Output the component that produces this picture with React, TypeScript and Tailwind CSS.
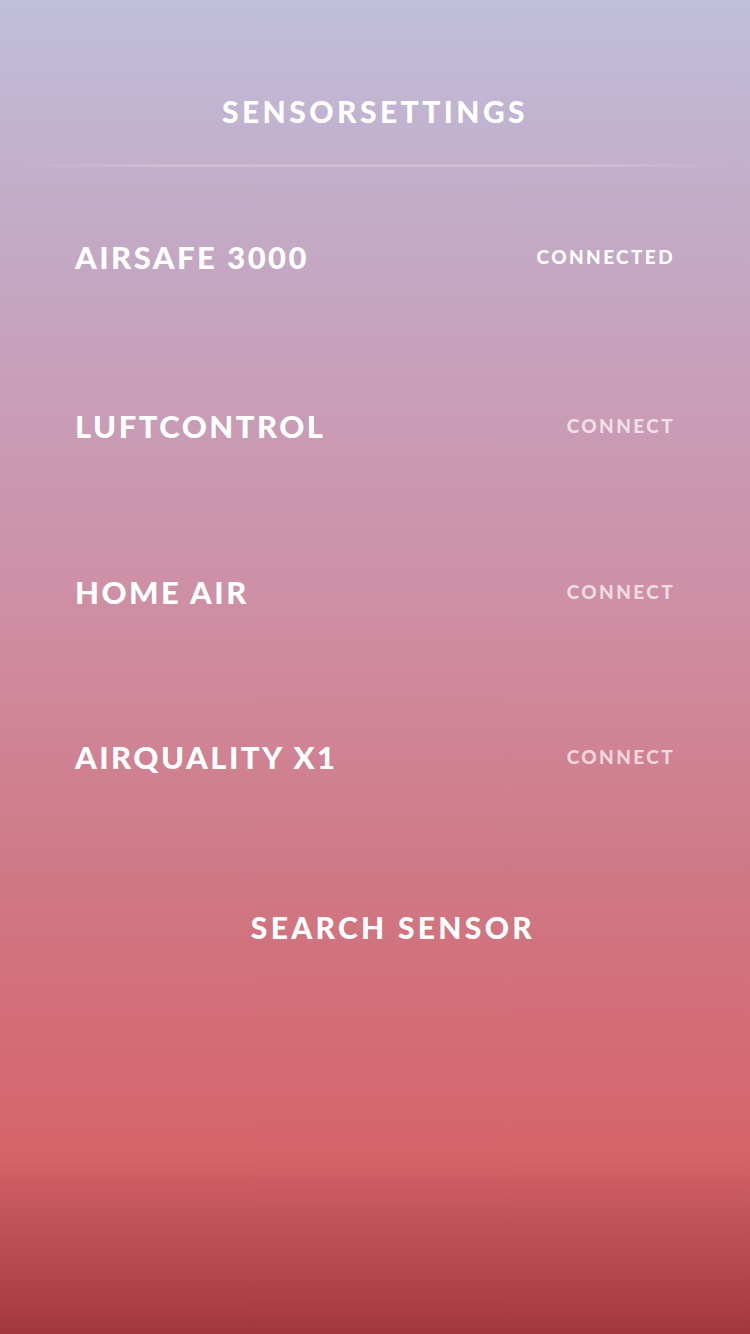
// Sensor settings screen

const SENSORS = [
  { name: 'AIRSAFE 3000', connected: true, mt: 'mt-[70px]' },
  { name: 'LUFTCONTROL', connected: false, mt: 'mt-[129px]' },
  { name: 'HOME AIR', connected: false, mt: 'mt-[126px]' },
  { name: 'AIRQUALITY X1', connected: false, mt: 'mt-[125px]' },
]

export default function App() {
  return (
    <div className="w-[750px] h-[1334px] overflow-hidden bg-[linear-gradient(180deg,#bfbedb_0%,#c4a8c4_19%,#ce8fa5_45%,#d07783_67%,#d6646b_86%,#a3373e_100%)] font-['Lato','Open_Sans',sans-serif] text-white">
      <div className="pt-[93px] h-[129px] text-center text-[30px] leading-[36px] font-black tracking-[0.115em]">
        SENSORSETTINGS
      </div>

      <div className="mt-[35px] mx-[20px] h-[3px] bg-[linear-gradient(90deg,rgba(255,255,255,0)_0%,rgba(255,255,255,0.18)_20%,rgba(255,255,255,0.18)_80%,rgba(255,255,255,0)_100%)]" />

      <ul>
        {SENSORS.map((s) => (
          <li key={s.name} className={`${s.mt} h-[40px] px-[75px] flex items-center justify-between`}>
            <span className="text-[31px] font-black tracking-[0.08em]">{s.name}</span>
            <span
              className={`text-[19px] font-black tracking-[0.125em] ${
                s.connected ? 'text-white' : 'text-white/70'
              }`}
            >
              {s.connected ? 'CONNECTED' : 'CONNECT'}
            </span>
          </li>
        ))}
      </ul>

      <div className="mt-[130px] h-[40px] flex items-center justify-center pl-[36px]">
        <span className="text-[30px] font-black tracking-[0.11em]">SEARCH SENSOR</span>
      </div>
    </div>
  )
}
